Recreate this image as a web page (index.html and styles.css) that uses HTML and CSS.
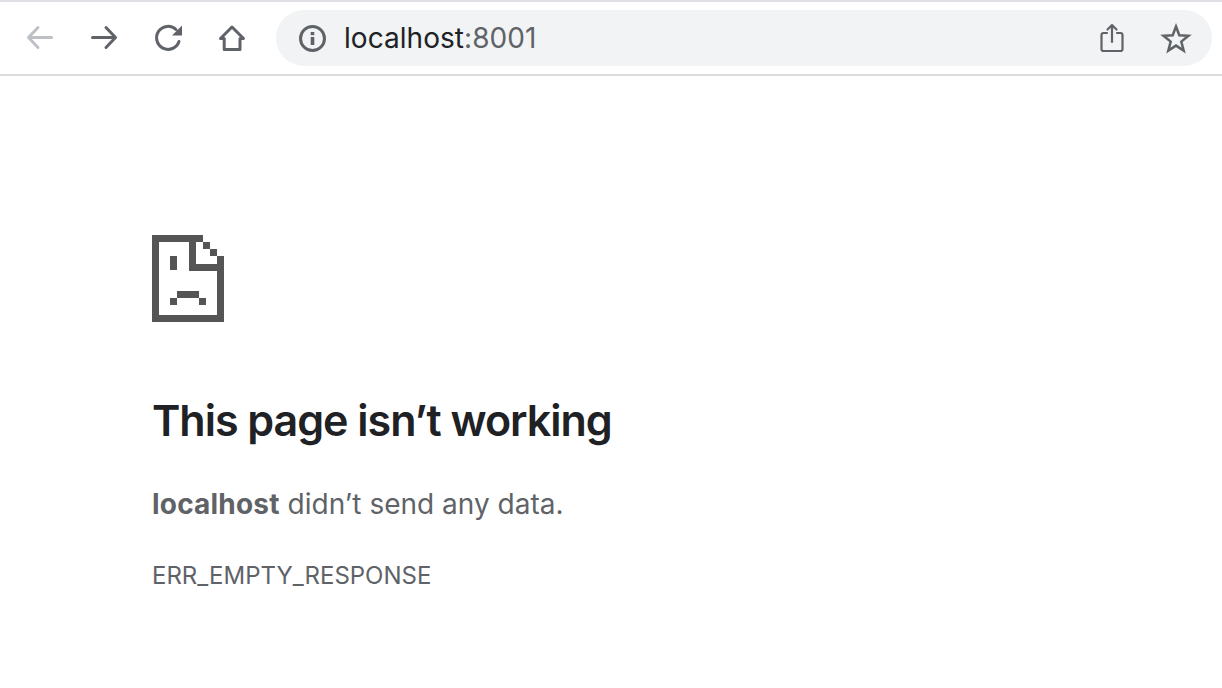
FILE: index.html
```html
<!DOCTYPE html>
<html lang="en">
<head>
<meta charset="utf-8">
<title>localhost:8001</title>
<link rel="stylesheet" href="styles.css">
</head>
<body>
<header class="toolbar">
  <nav class="nav">
    <svg class="icon" viewBox="0 0 32 32"><path class="stroke disabled" d="M27.500 15.500H4.500M14 5.500L4.500 15.500 14 25.500"/></svg>
    <svg class="icon" viewBox="0 0 32 32"><path class="stroke" d="M4.500 15.500h23M18 5.500l9.500 10-9.500 10"/></svg>
    <svg class="icon" viewBox="0 0 32 32"><path class="stroke" d="M27 19.500A11.500 11.500 0 1 1 24 7.500"/><path class="fill" d="M30 3.500V13.500H20z"/></svg>
    <svg class="icon" viewBox="0 0 32 32"><path class="stroke" d="M8.200 16.500H4.500L16 5l11.500 11.500H24V27.500H8.200z"/></svg>
  </nav>
  <div class="omnibox">
    <svg class="icon info" viewBox="0 0 32 32"><circle class="stroke" cx="16.500" cy="16.500" r="12"/><rect class="fill" x="14.700" y="15" width="3.600" height="8"/><rect class="fill" x="14.700" y="10" width="3.600" height="3.200"/></svg>
    <div class="url">localhost<span class="port">:8001</span></div>
    <svg class="icon share" viewBox="0 0 32 32"><path class="thin" d="M11 11H7.500a2 2 0 0 0-2 2v14a2 2 0 0 0 2 2h17a2 2 0 0 0 2-2V13a2 2 0 0 0-2-2H21M16 20V3M11.500 7.500L16 3l4.500 4.500"/></svg>
    <svg class="icon star" viewBox="0 0 32 32"><path class="stroke miter" d="M16 4.500l3.300 8.700 9.200.6-7.200 5.800 2.400 9L16 23.600l-7.700 5 2.400-9-7.200-5.800 9.200-.6z"/></svg>
  </div>
</header>
<main class="content">
  <svg class="sad" width="72" height="87" viewBox="0 0 72 87" shape-rendering="crispEdges">
    <path d="M0 0h51v7H7v73h58V30h7v57H0zM37 7h7v22h21v7H37zM51 7h7v7h-7zM58 14h7v7h-7zM65 21h7v9h-7zM18 21h7v14h-7zM25 56h22v7H25zM18 63h7v7h-7zM47 63h7v7h-7z"/>
  </svg>
  <h1 class="title">This page isn’t working</h1>
  <p class="message"><strong>localhost</strong> didn’t send any data.</p>
  <p class="code">ERR_EMPTY_RESPONSE</p>
</main>
</body>
</html>
```
FILE: styles.css
```css
* { box-sizing: border-box; }
html, body { margin: 0; height: 100%; background: #fff; overflow: hidden; }
body { font-family: Inter, "Liberation Sans", sans-serif; color: #202124; }

.toolbar {
  height: 76px;
  padding: 8px 10px 10px 24px;
  display: flex;
  align-items: flex-start;
  border-top: 2px solid #e0e0e4;
  border-bottom: 2px solid #dcdcdc;
}
.nav { display: flex; gap: 32px; width: 252px; height: 56px; align-items: center; }
.icon { width: 32px; height: 32px; flex: none; }
.stroke { fill: none; stroke: #5f6368; stroke-width: 3; stroke-linecap: round; stroke-linejoin: round; }
.stroke.disabled { stroke: #bdc1c6; }
.stroke.miter { stroke-width: 2.5; stroke-linejoin: miter; stroke-linecap: butt; }
.thin { fill: none; stroke: #5f6368; stroke-width: 2.2; stroke-linecap: round; stroke-linejoin: round; }
.fill { fill: #5f6368; }

.omnibox {
  flex: 1;
  height: 56px;
  border-radius: 28px;
  background: #f1f3f4;
  display: flex;
  align-items: center;
  padding: 0 20px;
}
.url { flex: 1; margin-left: 16px; font-size: 28px; letter-spacing: 0.05px; color: #202124; }
.port { color: #5f6368; }
.share { margin-right: 32px; }

.content { padding: 159px 0 0 152px; }
.sad { display: block; fill: #555; }
.title { margin: 72px 0 0; font-size: 43px; line-height: 52px; font-weight: 600; letter-spacing: -1.02px; color: #202124; }
.message { margin: 40px 0 0; font-size: 28px; line-height: 36px; color: #5f6368; }
.message strong { font-weight: 700; letter-spacing: 0.2px; }
.code { margin: 38px 0 0; font-size: 24px; line-height: 32px; color: #5f6368; }
```
